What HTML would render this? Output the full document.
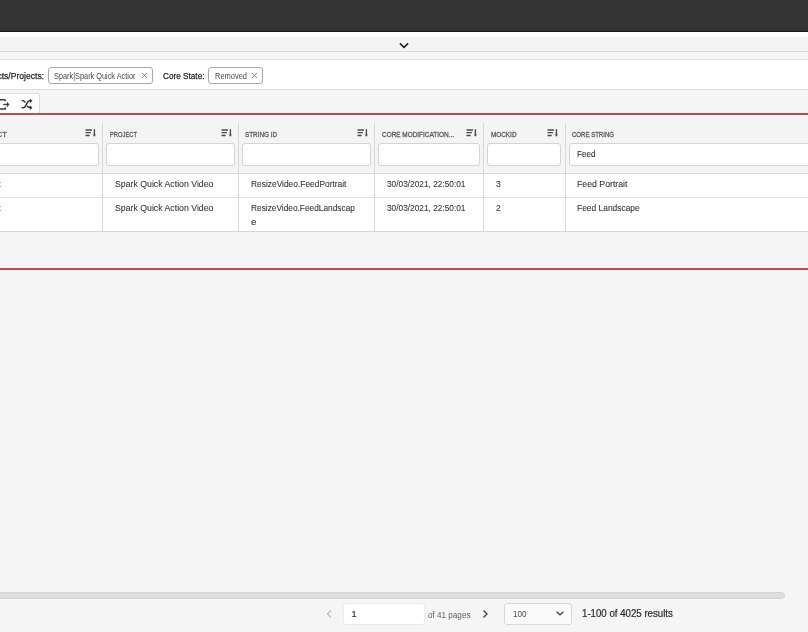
<!DOCTYPE html>
<html>
<head>
<meta charset="utf-8">
<style>
html,body{margin:0;padding:0;}
body{width:808px;height:632px;overflow:hidden;position:relative;background:#f5f5f5;font-family:"Liberation Sans",sans-serif;color:#333;}
.a{position:absolute;}
.t{position:absolute;white-space:nowrap;line-height:1;transform-origin:0 0;filter:grayscale(1);}
.lb{-webkit-text-stroke:0.25px #222;}
.bd{-webkit-text-stroke:0.1px #363636;}
.md{-webkit-text-stroke:0.2px #2a2a2a;}
.hs{-webkit-text-stroke:0.3px #585858;}
.inp{position:absolute;top:143px;height:20.5px;background:#fff;border:1px solid #d4d4d4;border-radius:3px;box-sizing:content-box;}
.vd{position:absolute;top:123px;width:1px;height:108px;background:#d9d9d9;}
.sort{position:absolute;top:128px;}
</style>
</head>
<body>
<div class="a" style="left:0;top:0;width:808px;height:31px;background:#333;"></div>
<div class="a" style="left:0;top:31px;width:808px;height:1px;background:#171717;"></div>
<div class="a" style="left:0;top:32px;width:808px;height:5px;background:#fff;"></div>
<div class="a" style="left:0;top:37px;width:808px;height:14px;background:#f3f3f3;"></div>
<svg class="a" style="left:398px;top:41px" width="12" height="8" viewBox="0 0 12 8"><path d="M1.9 2.4 L6 6.3 L10.1 2.4" fill="none" stroke="#222" stroke-width="1.6"/></svg>
<div class="a" style="left:0;top:51px;width:808px;height:1px;background:#dadada;"></div>
<div class="a" style="left:0;top:52px;width:808px;height:7px;background:#f5f5f5;"></div>
<div class="a" style="left:0;top:59px;width:808px;height:1px;background:#dedede;"></div>
<div class="a" style="left:0;top:60px;width:808px;height:29px;background:#fff;"></div>
<div class="a" style="left:0;top:89px;width:808px;height:1px;background:#dcdcdc;"></div>
<div class="t lb" id="lbl1" style="right:763.70px;top:70.93px;font-size:9.88px;color:#222;transform-origin:100% 0;transform:scaleX(0.8694);">Products/Projects:</div>
<div class="a" style="left:48px;top:67px;width:102.5px;height:14.5px;border:1px solid #a8a8a8;border-radius:3px;background:#fff;"></div>
<div class="t" id="chip1" style="left:54.00px;top:72.36px;font-size:8.43px;color:#474747;transform:scaleX(0.8712);">Spark|Spark Quick Actior</div>
<svg class="a" style="left:141px;top:72px" width="7" height="7" viewBox="0 0 7 7"><path d="M1 1 L6 6 M6 1 L1 6" stroke="#6a6a6a" stroke-width="0.8"/></svg>
<div class="t lb" id="lbl2" style="left:162.50px;top:70.93px;font-size:9.88px;color:#222;transform:scaleX(0.8301);">Core State:</div>
<div class="a" style="left:207.5px;top:67px;width:53.5px;height:14.5px;border:1px solid #a8a8a8;border-radius:3px;background:#fff;"></div>
<div class="t" id="chip2" style="left:214.50px;top:72.36px;font-size:8.43px;color:#474747;transform:scaleX(0.8869);">Removed</div>
<svg class="a" style="left:251px;top:72px" width="7" height="7" viewBox="0 0 7 7"><path d="M1 1 L6 6 M6 1 L1 6" stroke="#6a6a6a" stroke-width="0.8"/></svg>
<div class="a" style="left:-4px;top:93px;width:42px;height:22px;border:1px solid #dcdcdc;border-radius:2px;background:#fff;"></div>
<svg class="a" style="left:0;top:98px" width="12" height="13" viewBox="0 0 12 13"><path d="M5.3 1.8 H-1 M-1 10.9 H5.3 V9.6 M5.3 3.3 V1.8" fill="none" stroke="#3c3c3c" stroke-width="1.5" stroke-linejoin="round"/><path d="M3.3 6.5 H8" fill="none" stroke="#3c3c3c" stroke-width="1.4"/><path d="M7.2 4.3 L9.1 6.5 L7.2 8.7 Z" fill="#3c3c3c" stroke="#3c3c3c" stroke-width="0.6" stroke-linejoin="round"/></svg>
<svg class="a" style="left:18px;top:96px" width="18" height="16" viewBox="0 0 18 16"><path d="M4.3 4.6 C5.3 4.6 6.1 5 6.9 5.9" fill="none" stroke="#333" stroke-width="1.5" stroke-linecap="round"/><path d="M4.2 11.7 H5.3 C6.3 11.7 6.8 11.2 7.6 10 L9.6 6.2 C10.2 5.2 10.8 4.8 11.8 4.8 H12.6" fill="none" stroke="#333" stroke-width="1.5" stroke-linecap="round"/><path d="M12.3 3.1 L14 4.8 L12.3 6.5 Z" fill="#333" stroke="#333" stroke-width="0.7" stroke-linejoin="round"/><path d="M9.6 10.3 C10.3 11.3 11 11.7 12.6 11.7" fill="none" stroke="#333" stroke-width="1.5" stroke-linecap="round"/><path d="M12.3 10 L14 11.7 L12.3 13.4 Z" fill="#333" stroke="#333" stroke-width="0.7" stroke-linejoin="round"/></svg>
<div class="a" style="left:0;top:113px;width:808px;height:2px;background:#b5524c;"></div>
<div class="a" style="left:0;top:115px;width:808px;height:58px;background:#f4f4f4;"></div>
<div class="t hs" id="h0" style="left:-3.50px;top:130.86px;font-size:7.85px;color:#585858;">CT</div>
<div class="t hs" id="h1" style="left:109.50px;top:130.86px;font-size:7.85px;color:#585858;transform:scaleX(0.7371);">PROJECT</div>
<div class="t hs" id="h2" style="left:245.20px;top:130.86px;font-size:7.85px;color:#585858;transform:scaleX(0.8064);">STRING ID</div>
<div class="t hs" id="h3" style="left:381.50px;top:130.86px;font-size:7.85px;color:#585858;transform:scaleX(0.8188);">CORE MODIFICATION...</div>
<div class="t hs" id="h4" style="left:490.60px;top:130.86px;font-size:7.85px;color:#585858;transform:scaleX(0.8122);">MOCKID</div>
<div class="t hs" id="h5" style="left:572.00px;top:130.86px;font-size:7.85px;color:#585858;transform:scaleX(0.7705);">CORE STRING</div>
<svg class="sort" style="left:85px" width="12" height="10" viewBox="0 0 12 10"><path d="M0.5 2 H7" stroke="#4a4a4a" stroke-width="1.5"/><path d="M0.5 4.6 H5.9 M0.5 7.5 H4.7" stroke="#4a4a4a" stroke-width="1.3"/><path d="M9.4 1.2 V7.5" stroke="#4a4a4a" stroke-width="1.4"/><path d="M8.4 6.6 L9.4 8.3 L10.4 6.6" fill="#4a4a4a" stroke="#4a4a4a" stroke-width="0.7"/></svg>
<svg class="sort" style="left:221px" width="12" height="10" viewBox="0 0 12 10"><path d="M0.5 2 H7" stroke="#4a4a4a" stroke-width="1.5"/><path d="M0.5 4.6 H5.9 M0.5 7.5 H4.7" stroke="#4a4a4a" stroke-width="1.3"/><path d="M9.4 1.2 V7.5" stroke="#4a4a4a" stroke-width="1.4"/><path d="M8.4 6.6 L9.4 8.3 L10.4 6.6" fill="#4a4a4a" stroke="#4a4a4a" stroke-width="0.7"/></svg>
<svg class="sort" style="left:357px" width="12" height="10" viewBox="0 0 12 10"><path d="M0.5 2 H7" stroke="#4a4a4a" stroke-width="1.5"/><path d="M0.5 4.6 H5.9 M0.5 7.5 H4.7" stroke="#4a4a4a" stroke-width="1.3"/><path d="M9.4 1.2 V7.5" stroke="#4a4a4a" stroke-width="1.4"/><path d="M8.4 6.6 L9.4 8.3 L10.4 6.6" fill="#4a4a4a" stroke="#4a4a4a" stroke-width="0.7"/></svg>
<svg class="sort" style="left:466px" width="12" height="10" viewBox="0 0 12 10"><path d="M0.5 2 H7" stroke="#4a4a4a" stroke-width="1.5"/><path d="M0.5 4.6 H5.9 M0.5 7.5 H4.7" stroke="#4a4a4a" stroke-width="1.3"/><path d="M9.4 1.2 V7.5" stroke="#4a4a4a" stroke-width="1.4"/><path d="M8.4 6.6 L9.4 8.3 L10.4 6.6" fill="#4a4a4a" stroke="#4a4a4a" stroke-width="0.7"/></svg>
<svg class="sort" style="left:547px" width="12" height="10" viewBox="0 0 12 10"><path d="M0.5 2 H7" stroke="#4a4a4a" stroke-width="1.5"/><path d="M0.5 4.6 H5.9 M0.5 7.5 H4.7" stroke="#4a4a4a" stroke-width="1.3"/><path d="M9.4 1.2 V7.5" stroke="#4a4a4a" stroke-width="1.4"/><path d="M8.4 6.6 L9.4 8.3 L10.4 6.6" fill="#4a4a4a" stroke="#4a4a4a" stroke-width="0.7"/></svg>
<div class="inp" style="left:-4px;width:101px;"></div>
<div class="inp" style="left:106px;width:127px;"></div>
<div class="inp" style="left:242px;width:127px;"></div>
<div class="inp" style="left:378px;width:100px;"></div>
<div class="inp" style="left:487px;width:72px;"></div>
<div class="inp" style="left:569px;width:260px;"></div>
<div class="t bd" id="feed" style="left:577.00px;top:150.13px;font-size:9.30px;color:#2a2a2a;transform:scaleX(0.8725);">Feed</div>
<div class="a" style="left:0;top:174px;width:808px;height:57px;background:#fff;"></div>
<div class="a" style="left:0;top:173px;width:808px;height:1px;background:#d8d8d8;"></div>
<div class="a" style="left:0;top:197px;width:808px;height:1px;background:#e0e0e0;"></div>
<div class="a" style="left:0;top:231px;width:808px;height:1px;background:#d8d8d8;"></div>
<div class="vd" style="left:102px;"></div>
<div class="vd" style="left:238px;"></div>
<div class="vd" style="left:374px;"></div>
<div class="vd" style="left:483px;"></div>
<div class="vd" style="left:565px;"></div>
<div class="t bd" style="left:-1.50px;top:179.03px;font-size:9.88px;color:#363636;">:</div>
<div class="t bd" id="c01" style="left:114.50px;top:179.03px;font-size:9.88px;color:#363636;transform:scaleX(0.8846);">Spark Quick Action Video</div>
<div class="t bd" id="c02" style="left:251.00px;top:179.03px;font-size:9.88px;color:#363636;transform:scaleX(0.8493);">ResizeVideo.FeedPortrait</div>
<div class="t bd" id="c03" style="left:386.80px;top:179.03px;font-size:9.88px;color:#363636;transform:scaleX(0.8402);">30/03/2021, 22:50:01</div>
<div class="t bd" style="left:495.50px;top:179.03px;font-size:9.88px;color:#363636;transform:scaleX(0.8731);">3</div>
<div class="t bd" id="c05" style="left:577.30px;top:179.03px;font-size:9.88px;color:#363636;transform:scaleX(0.8839);">Feed Portrait</div>
<div class="t bd" style="left:-1.50px;top:202.73px;font-size:9.88px;color:#363636;">:</div>
<div class="t bd" id="c11" style="left:114.50px;top:202.73px;font-size:9.88px;color:#363636;transform:scaleX(0.8846);">Spark Quick Action Video</div>
<div class="t bd" id="c12" style="left:251.00px;top:202.73px;font-size:9.88px;color:#363636;transform:scaleX(0.8424);">ResizeVideo.FeedLandscap</div>
<div class="t bd" id="c13" style="left:386.80px;top:202.73px;font-size:9.88px;color:#363636;transform:scaleX(0.8402);">30/03/2021, 22:50:01</div>
<div class="t bd" style="left:495.50px;top:202.73px;font-size:9.88px;color:#363636;transform:scaleX(0.8731);">2</div>
<div class="t bd" id="c15" style="left:577.30px;top:202.73px;font-size:9.88px;color:#363636;transform:scaleX(0.8528);">Feed Landscape</div>
<div class="t bd" style="left:251.00px;top:217.23px;font-size:9.88px;color:#363636;">e</div>
<div class="a" style="left:0;top:268px;width:808px;height:2px;background:#c84848;"></div>
<div class="a" style="left:-10px;top:592px;width:793px;height:5px;border-radius:4px;background:#dedede;border:1px solid #d2d2d2;"></div>
<svg class="a" style="left:325px;top:609px" width="8" height="10" viewBox="0 0 8 10"><path d="M6 1.5 L2.5 5 L6 8.5" fill="none" stroke="#bdbdbd" stroke-width="1.2"/></svg>
<div class="a" style="left:343px;top:603px;width:80px;height:20px;background:#fff;border:1px solid #ececec;border-radius:3px;"></div>
<div class="t md" id="pg1" style="left:351.80px;top:610.06px;font-size:8.43px;color:#2a2a2a;">1</div>
<div class="t" id="ofp" style="left:428.00px;top:611.36px;font-size:8.43px;color:#5e5e5e;transform:scaleX(0.9646);">of 41 pages</div>
<svg class="a" style="left:481px;top:609px" width="8" height="10" viewBox="0 0 8 10"><path d="M2.5 1.5 L6 5 L2.5 8.5" fill="none" stroke="#444" stroke-width="1.3"/></svg>
<div class="a" style="left:504px;top:603px;width:66px;height:19.5px;background:#fafafa;border:1px solid #d8d8d8;border-radius:3px;"></div>
<div class="t" id="p100" style="left:512.50px;top:610.16px;font-size:8.43px;color:#4a4a4a;transform:scaleX(0.9668);">100</div>
<svg class="a" style="left:555px;top:610px" width="10" height="7" viewBox="0 0 10 7"><path d="M1.6 1.7 L5 5 L8.4 1.7" fill="none" stroke="#3a3a3a" stroke-width="1.25"/></svg>
<div class="t md" id="res" style="left:582.30px;top:609.01px;font-size:10.03px;color:#2a2a2a;transform:scaleX(0.9658);">1-100 of 4025 results</div>
</body>
</html>
